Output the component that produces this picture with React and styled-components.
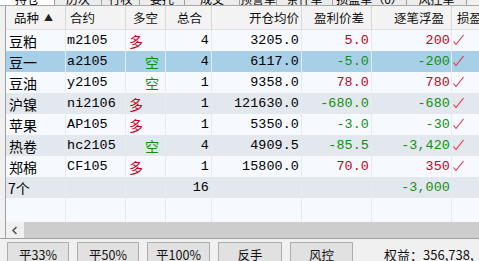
import React from 'react';
import styled, { createGlobalStyle } from 'styled-components';

const GlobalStyle = createGlobalStyle`
  html, body { margin: 0; padding: 0; background: #f0f0f0; }
`;

const cols = [
  { w: 60, head: '品种', sort: true, hAlign: 'left', hPad: '0 0 0 8px' },
  { w: 60, head: '合约', hAlign: 'left', hPad: '0 0 0 4px' },
  { w: 40, head: '多空', hAlign: 'center', hPad: '0' },
  { w: 46, head: '总合', hAlign: 'center', hPad: '0 0 0 2px' },
  { w: 90, head: '开仓均价', hAlign: 'right', hPad: '0 2px 0 0' },
  { w: 70, head: '盈利价差', hAlign: 'right', hPad: '0 7px 0 0' },
  { w: 80, head: '逐笔浮盈', hAlign: 'right', hPad: '0 7px 0 0' },
  { w: 60, head: '损盈', hAlign: 'left', hPad: '0 0 0 5px' },
];

const tabs = [
  { label: '持仓', w: 55, active: true },
  { label: '历次', w: 47 },
  { label: '行权', w: 38 },
  { label: '委托', w: 45 },
  { label: '成交', w: 55 },
  { label: '预警单', w: 37 },
  { label: '条件单', w: 56 },
  { label: '损盈单（0）', w: 74 },
  { label: '风控单', w: 60 },
];

const rows = [
  { name: '豆粕', code: 'm2105', side: '多', qty: 4, open: '3205.0', diff: '5.0', pnl: '200', bg: 'white' },
  { name: '豆一', code: 'a2105', side: '空', qty: 4, open: '6117.0', diff: '-5.0', pnl: '-200', bg: 'sel' },
  { name: '豆油', code: 'y2105', side: '空', qty: 1, open: '9358.0', diff: '78.0', pnl: '780', bg: 'white' },
  { name: '沪镍', code: 'ni2106', side: '多', qty: 1, open: '121630.0', diff: '-680.0', pnl: '-680', bg: 'grey' },
  { name: '苹果', code: 'AP105', side: '多', qty: 1, open: '5350.0', diff: '-3.0', pnl: '-30', bg: 'white' },
  { name: '热卷', code: 'hc2105', side: '空', qty: 4, open: '4909.5', diff: '-85.5', pnl: '-3,420', bg: 'grey' },
  { name: '郑棉', code: 'CF105', side: '多', qty: 1, open: '15800.0', diff: '70.0', pnl: '350', bg: 'white' },
];

const buttons = [
  { label: '平33%', w: 62 },
  { label: '平50%', w: 62 },
  { label: '平100%', w: 63 },
  { label: '反手', w: 64 },
  { label: '风控', w: 63 },
];

const bgs = { white: '#f6f9fe', sel: '#a8cfe8', grey: '#e3e7ee' };
const RED = '#c8001c';
const GREEN = '#109010';
const tone = (v) => (v.startsWith('-') ? GREEN : RED);
const template = cols.map((c) => `${c.w}px`).join(' ');

const Page = styled.div`
  width: 479px;
  height: 261px;
  overflow: hidden;
  background: #f0f0f0;
  font-family: "Noto Sans CJK SC", "Liberation Sans", sans-serif;
  color: #000;
`;

const TabStrip = styled.div`
  display: flex;
  height: 5px;
  overflow: hidden;
  border-bottom: 1px solid #a9a9a9;
`;

const Tab = styled.div`
  flex: none;
  width: ${(p) => p.$w}px;
  box-sizing: border-box;
  border-right: 1px solid #a0a0a0;
  background: ${(p) => (p.$active ? '#ffffff' : '#ececec')};
  font-size: 12px;
  line-height: 12px;
  text-align: center;
  white-space: nowrap;
  overflow: hidden;
  span { display: block; margin-top: -7px; }
`;

const Frame = styled.div`
  margin-left: 5px;
  border-left: 1px solid #a0a0a0;
  width: 600px;
`;

const Grid = styled.div`
  display: grid;
  grid-template-columns: ${template};
  height: ${(p) => p.$h}px;
  background: ${(p) => p.$bg || bgs.white};
`;

const HeadCell = styled.div`
  display: flex;
  align-items: center;
  justify-content: ${(p) => (p.$align === 'left' ? 'flex-start' : p.$align === 'right' ? 'flex-end' : 'center')};
  padding: ${(p) => p.$pad};
  background: #f3f3f3;
  border-right: 1px solid #d8d8d8;
  border-bottom: 1px solid #e2e2e2;
  font-size: 12.5px;
  color: #111;
  white-space: nowrap;
  overflow: hidden;
`;

const SortMark = styled.span`
  font-size: 9px;
  margin-left: 5px;
  color: #222;
`;

const Cell = styled.div`
  display: flex;
  align-items: center;
  justify-content: ${(p) => (p.$right ? 'flex-end' : 'flex-start')};
  padding: 0 ${(p) => p.$pr ?? 2}px 0 ${(p) => p.$pl ?? 3}px;
  border-right: 1px solid #e6ebf2;
  white-space: nowrap;
  overflow: visible;
  min-width: 0;
  font-size: 14px;
  color: ${(p) => p.$color || '#000'};
`;

const Num = styled.span`
  font-family: "Liberation Mono", "DejaVu Sans Mono", monospace;
  font-size: 13.4px;
  letter-spacing: 0.1px;
`;

const Side = styled.span`
  font-size: 14px;
  color: ${(p) => (p.$long ? RED : GREEN)};
  padding-left: ${(p) => (p.$long ? 0 : 16)}px;
`;

const Scrollbar = styled.div`
  display: flex;
  height: 16px;
  background: #f0f0f0;
`;

const ScrollArrow = styled.div`
  width: 17px;
  display: flex;
  align-items: center;
  justify-content: center;
`;

const ScrollThumb = styled.div`
  flex: 1;
  margin: 0 0 0 1px;
  background: #cdcdcd;
`;

const Bottom = styled.div`
  border-top: 1px solid #a0a0a0;
  height: 30px;
  display: flex;
  align-items: flex-start;
  padding: 3px 0 0 7px;
  gap: 8px;
`;

const Button = styled.div`
  flex: none;
  width: ${(p) => p.$w}px;
  height: 24px;
  box-sizing: border-box;
  border: 1px solid #adadad;
  background: #e1e1e1;
  display: flex;
  justify-content: center;
  padding-top: 2px;
  font-size: 12.5px;
  color: #111;
`;

const Equity = styled.div`
  margin-left: 23px;
  padding-top: 3px;
  font-size: 13px;
  white-space: nowrap;
  color: #111;
`;

const Tick = () => (
  <svg width="13" height="13" viewBox="0 0 13 13" style={{ marginTop: -3 }}>
    <path d="M1.5 8.5 L4 11.5 L11.5 2" fill="none" stroke="#e0303c" strokeWidth="1.1" />
  </svg>
);

const PositionRow = ({ r }) => (
  <Grid $h={21} $bg={bgs[r.bg]}>
    <Cell>{r.name}</Cell>
    <Cell $pl={1}><Num>{r.code}</Num></Cell>
    <Cell><Side $long={r.side === '多'}>{r.side}</Side></Cell>
    <Cell $right><Num>{r.qty}</Num></Cell>
    <Cell $right><Num>{r.open}</Num></Cell>
    <Cell $right $color={tone(r.diff)}><Num>{r.diff}</Num></Cell>
    <Cell $right $pr={1} $color={tone(r.pnl)}><Num>{r.pnl}</Num></Cell>
    <Cell $pl={0}><Tick /></Cell>
  </Grid>
);

export default function App() {
  return (
    <Page>
      <GlobalStyle />
      <TabStrip>
        {tabs.map((t) => (
          <Tab key={t.label} $w={t.w} $active={t.active}><span>{t.label}</span></Tab>
        ))}
      </TabStrip>
      <Frame>
        <Grid $h={24}>
          {cols.map((c) => (
            <HeadCell key={c.head} $align={c.hAlign} $pad={c.hPad}>
              {c.head}
              {c.sort && <SortMark>▲</SortMark>}
            </HeadCell>
          ))}
        </Grid>
        {rows.map((r) => <PositionRow key={r.code} r={r} />)}
        <Grid $h={21} $bg={bgs.grey}>
          <Cell $pl={2}>7个</Cell>
          <Cell />
          <Cell />
          <Cell $right><Num>16</Num></Cell>
          <Cell />
          <Cell />
          <Cell $right $pr={1} $color={GREEN}><Num>-3,000</Num></Cell>
          <Cell />
        </Grid>
        <Grid $h={24}>
          {cols.map((c) => <Cell key={c.head} />)}
        </Grid>
        <Scrollbar>
          <ScrollArrow>
            <svg width="8" height="9" viewBox="0 0 8 9">
              <path d="M5.5 1 L2 4.5 L5.5 8" fill="none" stroke="#555" strokeWidth="1.6" />
            </svg>
          </ScrollArrow>
          <ScrollThumb />
        </Scrollbar>
      </Frame>
      <Bottom>
        {buttons.map((b) => <Button key={b.label} $w={b.w}>{b.label}</Button>)}
        <Equity>权益：356,738,</Equity>
      </Bottom>
    </Page>
  );
}
